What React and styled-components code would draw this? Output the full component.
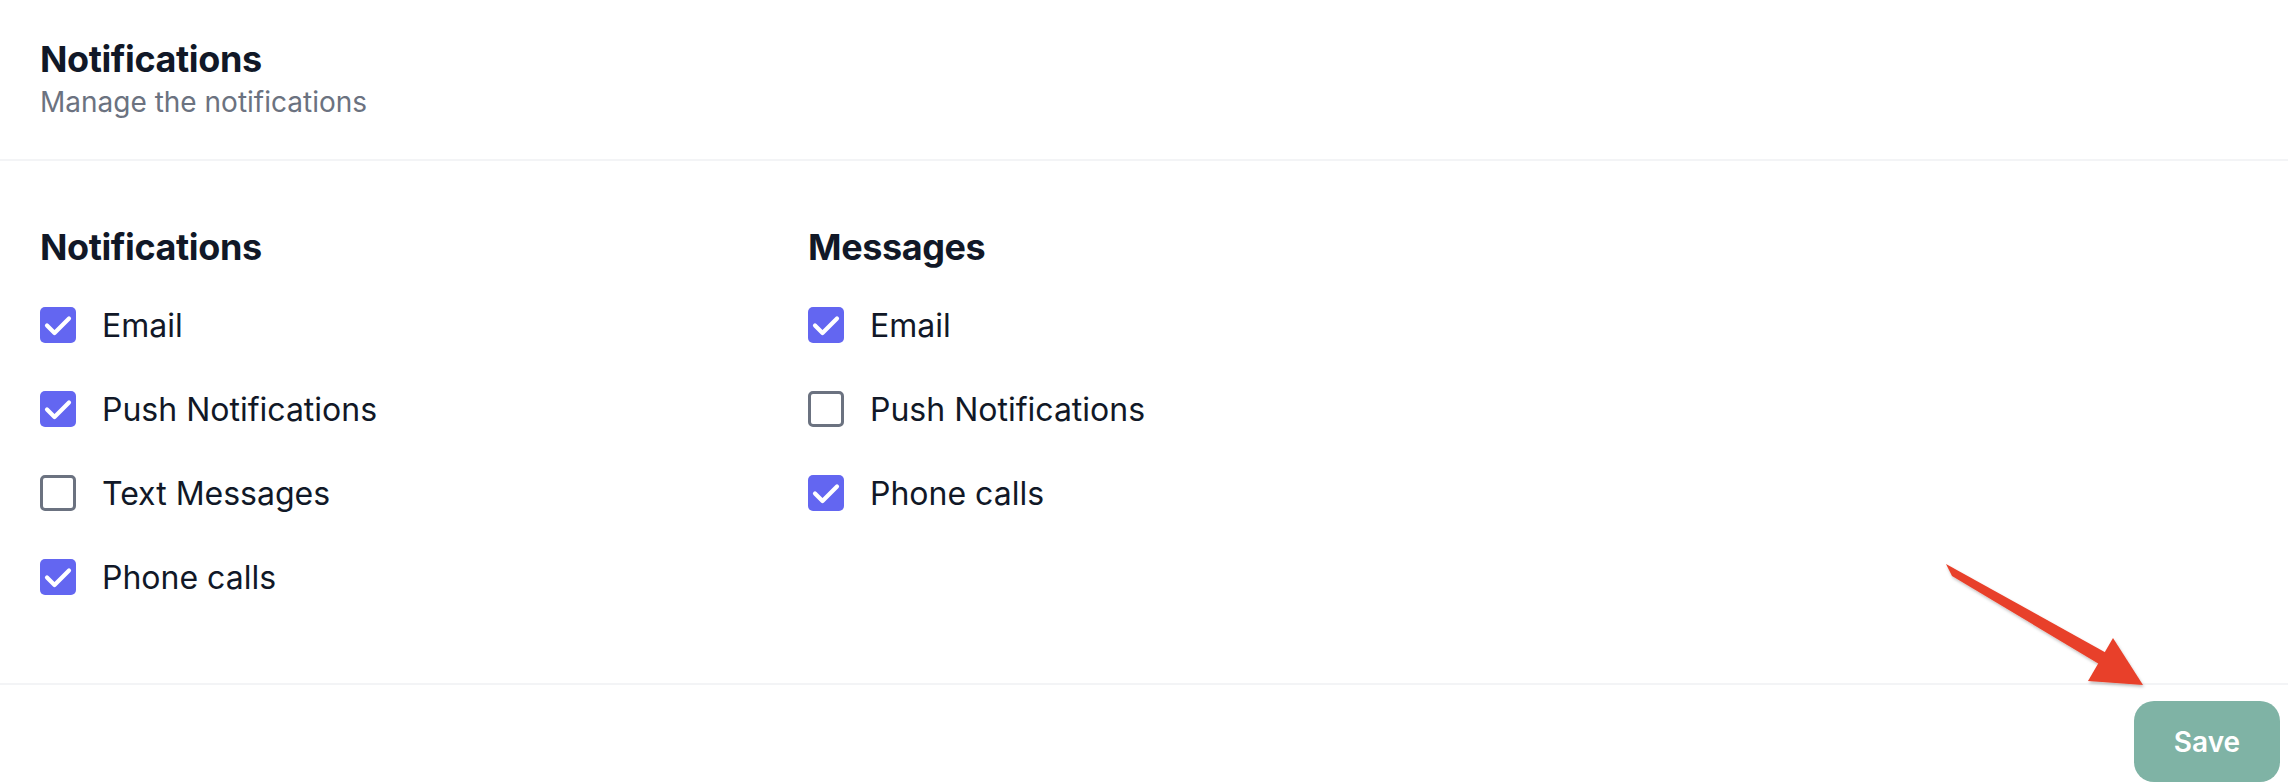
import React, { useState } from "react";
import styled, { createGlobalStyle } from "styled-components";

const GlobalStyle = createGlobalStyle`
  html, body {
    margin: 0;
    padding: 0;
    background: #ffffff;
  }
  body {
    font-family: Inter, "Liberation Sans", sans-serif;
    color: #111827;
  }
`;

const Page = styled.div`
  position: relative;
  width: 2288px;
  height: 784px;
  overflow: hidden;
  background: #ffffff;
`;

const Header = styled.div`
  padding: 37px 40px 0;
  height: 122px;
  border-bottom: 2px solid #f3f4f6;
`;

const Title = styled.h2`
  margin: 0;
  font-family: Inter, "Liberation Sans", sans-serif;
  font-size: 36px;
  line-height: 45px;
  font-weight: 700;
  letter-spacing: -0.4px;
  color: #111827;
`;

const Subtitle = styled.p`
  margin: 0;
  font-size: 28px;
  line-height: 40px;
  color: #6b7280;
`;

const Body = styled.div`
  display: flex;
  padding: 62px 40px 0;
  height: 460px;
  border-bottom: 2px solid #f3f4f6;
`;

const Column = styled.div`
  width: 768px;
  display: flex;
  flex-direction: column;
`;

const SectionTitle = styled.h3`
  margin: 0 0 36px;
  font-size: 36px;
  line-height: 48px;
  font-weight: 700;
  letter-spacing: -0.4px;
  color: #111827;
`;

const List = styled.div`
  display: flex;
  flex-direction: column;
  gap: 48px;
`;

const Row = styled.label`
  display: flex;
  align-items: center;
  gap: 26px;
  height: 36px;
  font-size: 32px;
  color: #111827;
  cursor: pointer;
`;

const Box = styled.span`
  width: 36px;
  height: 36px;
  box-sizing: border-box;
  border-radius: 5px;
  flex-shrink: 0;
  display: flex;
  align-items: center;
  justify-content: center;
  background: ${(p) => (p.$checked ? "#6366f1" : "#ffffff")};
  border: ${(p) => (p.$checked ? "none" : "3px solid #6b7280")};
`;

const Footer = styled.div`
  display: flex;
  justify-content: flex-end;
  padding: 16px 8px 0;
`;

const SaveButton = styled.button`
  width: 146px;
  height: 81px;
  border: none;
  border-radius: 20px;
  background: #7fb3a5;
  color: #ffffff;
  font-family: Inter, "Liberation Sans", sans-serif;
  font-size: 28px;
  font-weight: 600;
  cursor: pointer;
`;

const Annotation = styled.svg`
  position: absolute;
  left: 1930px;
  top: 555px;
  width: 230px;
  height: 150px;
  pointer-events: none;
  overflow: visible;
`;

const Check = () => (
  <svg width="36" height="36" viewBox="0 0 36 36" fill="none">
    <path d="M7 18.5l7.5 7.5L29 11.5" stroke="#fff" strokeWidth="4.2" strokeLinecap="round" strokeLinejoin="round" />
  </svg>
);

const Checkbox = ({ label, checked, onToggle }) => (
  <Row onClick={onToggle}>
    <Box $checked={checked}>{checked && <Check />}</Box>
    {label}
  </Row>
);

const initial = {
  notifications: [
    { label: "Email", checked: true },
    { label: "Push Notifications", checked: true },
    { label: "Text Messages", checked: false },
    { label: "Phone calls", checked: true }
  ],
  messages: [
    { label: "Email", checked: true },
    { label: "Push Notifications", checked: false },
    { label: "Phone calls", checked: true }
  ]
};

export default function App() {
  const [groups, setGroups] = useState(initial);

  const toggle = (group, i) => {
    setGroups({
      ...groups,
      [group]: groups[group].map((item, j) => (j === i ? { ...item, checked: !item.checked } : item))
    });
  };

  return (
    <Page>
      <GlobalStyle />
      <Header>
        <Title>Notifications</Title>
        <Subtitle>Manage the notifications</Subtitle>
      </Header>
      <Body>
        <Column>
          <SectionTitle>Notifications</SectionTitle>
          <List>
            {groups.notifications.map((item, i) => (
              <Checkbox key={i} label={item.label} checked={item.checked} onToggle={() => toggle("notifications", i)} />
            ))}
          </List>
        </Column>
        <Column>
          <SectionTitle>Messages</SectionTitle>
          <List>
            {groups.messages.map((item, i) => (
              <Checkbox key={i} label={item.label} checked={item.checked} onToggle={() => toggle("messages", i)} />
            ))}
          </List>
        </Column>
      </Body>
      <Footer>
        <SaveButton>Save</SaveButton>
      </Footer>
      {/* red arrow pointing at the save button */}
      <Annotation viewBox="1930 555 230 150">
        <defs>
          <filter id="arrowShadow" x="-20%" y="-20%" width="140%" height="140%">
            <feDropShadow dx="1" dy="2" stdDeviation="1.5" floodColor="#000" floodOpacity="0.25" />
          </filter>
        </defs>
        <g filter="url(#arrowShadow)" fill="#e8402a">
          <polygon points="1946,564 1952,576 2104,667 2110,655" />
          <polygon points="2113,638 2088,681 2143,685" />
        </g>
      </Annotation>
    </Page>
  );
}
